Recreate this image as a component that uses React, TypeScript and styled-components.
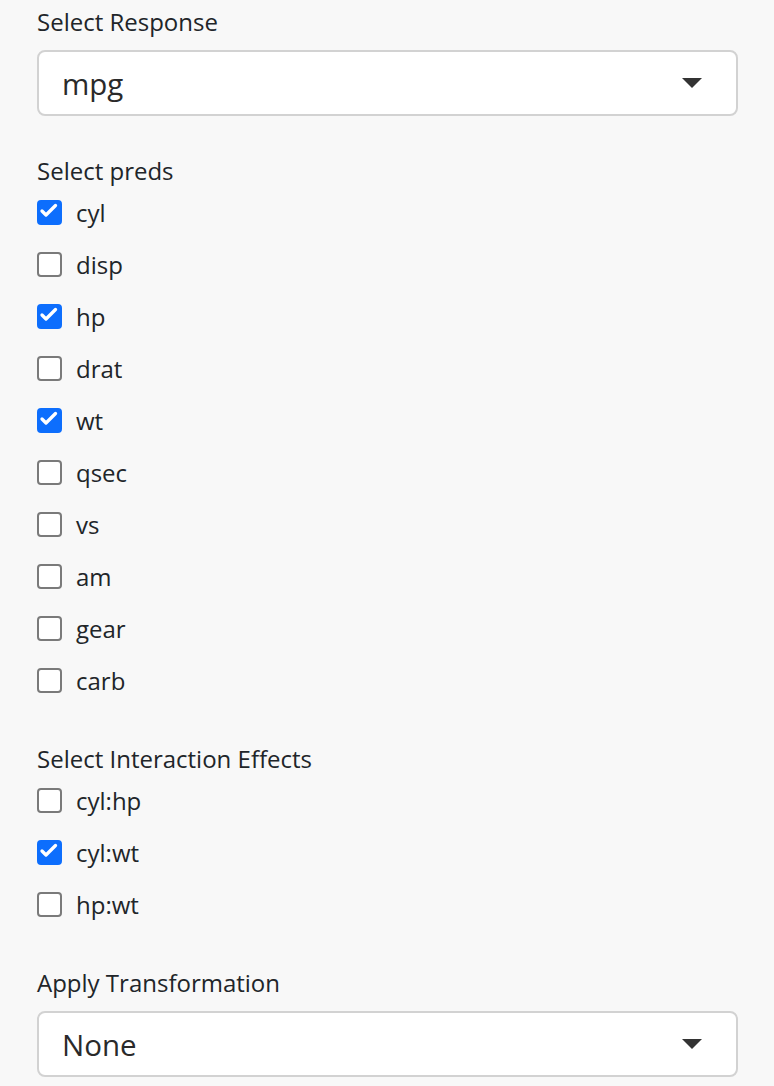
import React, { useState } from "react";
import styled, { createGlobalStyle } from "styled-components";

const GlobalStyle = createGlobalStyle`
  html, body {
    margin: 0;
    padding: 0;
    background-color: #f8f8f8;
  }
  body {
    font-family: "Open Sans", "Noto Sans", sans-serif;
    color: #212529;
  }
`;

const Sidebar = styled.div`
  display: flex;
  flex-direction: column;
  padding: 5px 36px 0 37px;
`;

const Group = styled.div<{ gap?: number }>`
  display: flex;
  flex-direction: column;
  margin-bottom: ${(props) => props.gap ?? 36}px;
`;

const Label = styled.div`
  font-size: 24px;
  line-height: 34px;
  height: 34px;
`;

const SelectBox = styled.div`
  display: flex;
  align-items: center;
  justify-content: space-between;
  box-sizing: border-box;
  height: 66px;
  margin-top: 11px;
  padding: 0 34px 0 23px;
  background-color: white;
  border: 2px solid #d2d2d2;
  border-radius: 8px;
  font-size: 29.5px;
  color: #2a2a2a;
  cursor: pointer;
`;

const CheckList = styled.div`
  display: flex;
  flex-direction: column;
  margin-top: -2px;
`;

const CheckRow = styled.label`
  display: flex;
  align-items: center;
  height: 52px;
  gap: 14px;
  font-size: 24px;
  cursor: pointer;
`;

const Box = styled.span<{ checked: boolean }>`
  display: flex;
  align-items: center;
  justify-content: center;
  box-sizing: border-box;
  width: 25px;
  height: 25px;
  border-radius: 4px;
  border: 2px solid ${(props) => (props.checked ? "#0d6efd" : "#7a7a7a")};
  background-color: ${(props) => (props.checked ? "#0d6efd" : "white")};
`;

function Caret() {
  return (
    <svg width="20" height="10" viewBox="0 0 20 10">
      <polygon points="0,0 20,0 10,10" fill="#333" />
    </svg>
  );
}

function Select({ value }: { value: string }) {
  return (
    <SelectBox>
      <span>{value}</span>
      <Caret />
    </SelectBox>
  );
}

function CheckGroup({ items, initial }: { items: string[]; initial: string[] }) {
  const [checked, setChecked] = useState<string[]>(initial);
  const toggle = (name: string) =>
    setChecked((cur) =>
      cur.includes(name) ? cur.filter((c) => c != name) : [...cur, name]
    );
  return (
    <CheckList>
      {items.map((item) => {
        const on = checked.includes(item);
        return (
          <CheckRow key={item} onClick={() => toggle(item)}>
            <Box checked={on}>
              {on && (
                <svg width="21" height="21" viewBox="0 0 21 21">
                  <path
                    d="M3 9 7 13 16.5 3.5"
                    fill="none"
                    stroke="white"
                    strokeWidth="3.3"
                    strokeLinecap="round"
                    strokeLinejoin="round"
                  />
                </svg>
              )}
            </Box>
            {item}
          </CheckRow>
        );
      })}
    </CheckList>
  );
}

function App() {
  return (
    <>
      <GlobalStyle />
      <Sidebar>
        <Group gap={38}>
          <Label>Select Response</Label>
          <Select value="mpg" />
        </Group>
        <Group>
          <Label>Select preds</Label>
          <CheckGroup
            items={["cyl", "disp", "hp", "drat", "wt", "qsec", "vs", "am", "gear", "carb"]}
            initial={["cyl", "hp", "wt"]}
          />
        </Group>
        <Group>
          <Label>Select Interaction Effects</Label>
          <CheckGroup items={["cyl:hp", "cyl:wt", "hp:wt"]} initial={["cyl:wt"]} />
        </Group>
        <Group gap={0}>
          <Label>Apply Transformation</Label>
          <Select value="None" />
        </Group>
      </Sidebar>
    </>
  );
}

export default App;
